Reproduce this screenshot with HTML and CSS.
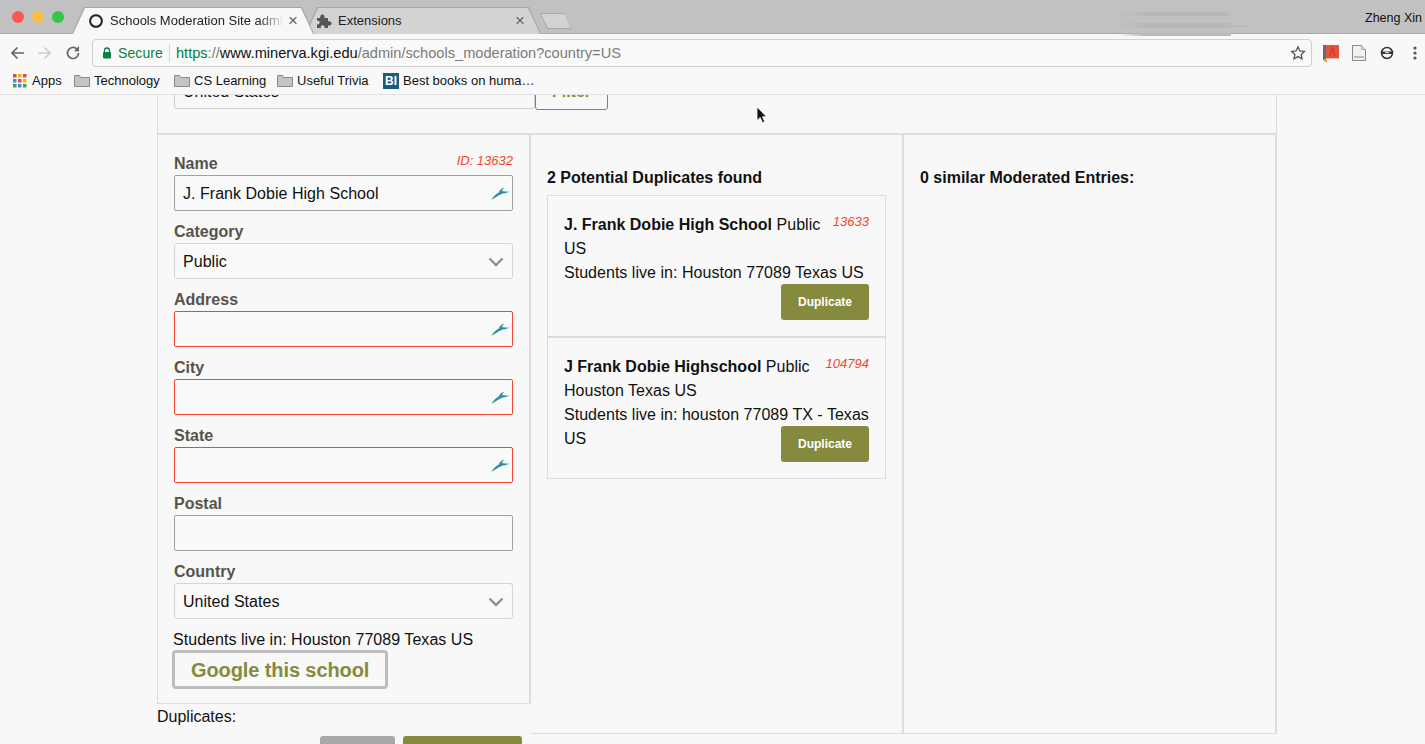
FILE: index.html
```html
<!DOCTYPE html>
<html>
<head lang="en">
    <meta charset="UTF-8">
    <title>Schools Moderation Site admin</title>
    <link rel="stylesheet" href="styles.css">
</head>
<body>
<div id="browser">
    <div id="tabstrip">
        <div id="lights"><i class="red"></i><i class="yellow"></i><i class="green"></i></div>
        <div class="tab active"><div class="tab-fill">
            <svg class="favicon" width="14" height="14" viewBox="0 0 14 14"><path d="M7 1.200a5.800 5.800 0 1 1-.01 0" fill="none" stroke="#222" stroke-width="2"/></svg>
            <span class="tab-title fade">Schools Moderation Site admin</span>
            <span class="tab-x">×</span>
        </div></div>
        <div class="tab second"><div class="tab-fill">
            <svg class="favicon" width="16" height="16" viewBox="0 0 16 16"><path d="M1 5h3.200C4 3 4.800 1.500 6.400 1.500S8.800 3 8.500 5H12v3.400c2-.4 3.500.4 3.500 2s-1.500 2.400-3.500 2V15H8.600c.3-1.800-.5-2.700-1.900-2.700S4.500 13.200 4.800 15H1v-3.600c1.500.3 2.700-.5 2.700-1.900S2.500 7.400 1 7.800z" fill="#555"/></svg>
            <span class="tab-title">Extensions</span>
            <span class="tab-x">×</span>
        </div></div>
        <div id="newtab"><div></div></div>
        <div id="username">Zheng Xin</div>
        <svg id="ghost" width="200" height="30" viewBox="0 0 200 30">
            <defs><linearGradient id="fadebar"><stop offset="0" stop-color="#b8b8b8" stop-opacity="0"/><stop offset=".25" stop-color="#b8b8b8"/></linearGradient></defs>
            <rect x="20" y="3" width="110" height="4" fill="url(#fadebar)"/>
            <rect x="20" y="14" width="110" height="5" fill="url(#fadebar)"/>
            <rect x="20" y="24" width="110" height="3" fill="url(#fadebar)"/>
            <rect x="128" y="3" width="4" height="4" fill="#b0bccd"/>
            <rect x="128" y="14" width="5" height="5" fill="#b0bccd"/>
            <rect x="128" y="24" width="5" height="3" fill="#b0bccd"/>
            <path d="M133 17h20" stroke="#b4b4b4"/>
            <circle cx="153" cy="1.500" r="2" fill="#b8c6cf"/>
            <circle cx="153" cy="17" r="2.500" fill="#b8c6cf"/>
            <circle cx="169" cy="22" r="1.500" fill="#b8c6cf"/>
        </svg>
    </div>
    <div id="toolbar">
        <svg class="nav" width="16" height="16" viewBox="0 0 16 16"><path d="M15 8H3M8.500 2.500 3 8l5.500 5.500" fill="none" stroke="#666" stroke-width="1.700"/></svg>
        <svg class="nav" width="16" height="16" viewBox="0 0 16 16"><path d="M1 8h12M7.500 2.500 13 8l-5.500 5.500" fill="none" stroke="#ccc" stroke-width="1.700"/></svg>
        <svg class="nav" width="16" height="16" viewBox="0 0 16 16"><path d="M13.500 8a5.500 5.500 0 1 1-1.600-3.900" fill="none" stroke="#666" stroke-width="1.700"/><path d="M14 1v5.200H8.800z" fill="#666"/></svg>
        <div id="omnibox">
            <svg width="10" height="12" viewBox="0 0 10 12"><path d="M2.500 5V3.500a2.500 2.500 0 0 1 5 0V5" fill="none" stroke="#0b8043" stroke-width="1.300"/><rect x="1" y="5" width="8" height="6.500" rx="1" fill="#0b8043"/></svg>
            <span class="secure">Secure</span>
            <span class="sep"></span>
            <span class="url"><span class="https">https</span><span class="dim">://</span><span class="host">www.minerva.kgi.edu</span><span class="dim">/admin/schools_moderation?country=US</span></span>
            <svg class="star" width="16" height="16" viewBox="0 0 16 16"><path d="m8 1.800 1.900 4.100 4.500.5-3.300 3 .9 4.400L8 11.600l-4 2.200.9-4.400-3.300-3 4.500-.5z" fill="none" stroke="#555" stroke-width="1.300"/></svg>
        </div>
        <div id="extensions">
            <svg width="16" height="18" viewBox="0 0 16 18"><rect x="0" y="1" width="3" height="15" fill="#5d6a85"/><rect x="3" y="1" width="13" height="13" fill="#e8503a"/><rect x="3" y="14" width="13" height="1" fill="#f3b0a5"/><rect x="1" y="15" width="3" height="3" fill="#eda92c"/><path d="m7 12 2.500-8 2.500 8" fill="none" stroke="#c33a28" stroke-width="1.200"/></svg>
            <svg width="14" height="16" viewBox="0 0 14 16"><path d="M.5.500h9l4 4v11H.5z" fill="#f1f1f1" stroke="#888"/><path d="M9.500.500v4h4" fill="#ddd" stroke="#aaa"/><rect x="2" y="11" width="10" height="2" fill="#bbb"/></svg>
            <svg width="14" height="14" viewBox="0 0 14 14"><circle cx="7" cy="7" r="5.500" fill="none" stroke="#333" stroke-width="1.500"/><rect x="2" y="5.500" width="10" height="2.500" fill="#333"/><rect x="5" y="6.200" width="4" height="1" fill="#eee"/></svg>
            <svg width="4" height="14" viewBox="0 0 4 14"><circle cx="2" cy="2" r="1.600" fill="#555"/><circle cx="2" cy="7" r="1.600" fill="#555"/><circle cx="2" cy="12" r="1.600" fill="#555"/></svg>
        </div>
    </div>
    <div id="bookmarks">
        <div class="bm apps">
            <svg width="14" height="14" viewBox="0 0 14 14">
                <rect width="3.500" height="3.500" fill="#e8453c"/><rect x="5" width="3.500" height="3.500" fill="#f4b400"/><rect x="10" width="3.500" height="3.500" fill="#e8453c"/>
                <rect y="5" width="3.500" height="3.500" fill="#4285f4"/><rect x="5" y="5" width="3.500" height="3.500" fill="#e8453c"/><rect x="10" y="5" width="3.500" height="3.500" fill="#f4b400"/>
                <rect y="10" width="3.500" height="3.500" fill="#34a853"/><rect x="5" y="10" width="3.500" height="3.500" fill="#4285f4"/><rect x="10" y="10" width="3.500" height="3.500" fill="#34a853"/>
            </svg>
            <span>Apps</span>
        </div>
        <div class="bm tech"><svg class="folder" width="16" height="14" viewBox="0 0 16 14"><path d="M.5 12.500v-11h5l1 2h9v9z" fill="#c4c4c4" stroke="#8a8a8a"/></svg><span>Technology</span></div>
        <div class="bm cs"><svg class="folder" width="16" height="14" viewBox="0 0 16 14"><path d="M.5 12.500v-11h5l1 2h9v9z" fill="#c4c4c4" stroke="#8a8a8a"/></svg><span>CS Learning</span></div>
        <div class="bm trivia"><svg class="folder" width="16" height="14" viewBox="0 0 16 14"><path d="M.5 12.500v-11h5l1 2h9v9z" fill="#c4c4c4" stroke="#8a8a8a"/></svg><span>Useful Trivia</span></div>
        <div class="bm"><span class="bi">BI</span><span>Best books on huma…</span></div>
    </div>
</div>

<div id="page">
    <div id="wrap">
        <div id="filter">
            <div class="filter-input">United States</div>
            <div class="filter-btn">Filter</div>
        </div>
        <div id="columns">
            <div class="left-cell">
                <div class="col-left">
                    <div class="label-row"><span class="label">Name</span><span class="id-red">ID: 13632</span></div>
                    <div class="field dark"><span>J. Frank Dobie High School</span><svg class="gazelle" width="21" height="15" viewBox="60 48 64 44"><path d="M64 89C70 79 78 72 87 67 89 60 95 55 104 52 99 56 97 60 98 63L120 65C110 69 100 70 94 72 84 76 74 84 64 89Z" fill="#2f8fa6"/></svg></div>

                    <div class="label">Category</div>
                    <div class="field light"><span>Public</span><svg class="chevron" width="16" height="10" viewBox="0 0 16 10"><path d="m1.500 1.500 6.500 6.500 6.500-6.500" fill="none" stroke="#8f8f8f" stroke-width="2.400"/></svg></div>

                    <div class="label">Address</div>
                    <div class="field error"><span></span><svg class="gazelle" width="21" height="15" viewBox="60 48 64 44"><path d="M64 89C70 79 78 72 87 67 89 60 95 55 104 52 99 56 97 60 98 63L120 65C110 69 100 70 94 72 84 76 74 84 64 89Z" fill="#2f8fa6"/></svg></div>

                    <div class="label">City</div>
                    <div class="field error"><span></span><svg class="gazelle" width="21" height="15" viewBox="60 48 64 44"><path d="M64 89C70 79 78 72 87 67 89 60 95 55 104 52 99 56 97 60 98 63L120 65C110 69 100 70 94 72 84 76 74 84 64 89Z" fill="#2f8fa6"/></svg></div>

                    <div class="label">State</div>
                    <div class="field error"><span></span><svg class="gazelle" width="21" height="15" viewBox="60 48 64 44"><path d="M64 89C70 79 78 72 87 67 89 60 95 55 104 52 99 56 97 60 98 63L120 65C110 69 100 70 94 72 84 76 74 84 64 89Z" fill="#2f8fa6"/></svg></div>

                    <div class="label">Postal</div>
                    <div class="field dark"></div>

                    <div class="label">Country</div>
                    <div class="field light"><span>United States</span><svg class="chevron" width="16" height="10" viewBox="0 0 16 10"><path d="m1.500 1.500 6.500 6.500 6.500-6.500" fill="none" stroke="#8f8f8f" stroke-width="2.400"/></svg></div>

                    <div class="live">Students live in: Houston 77089 Texas US</div>
                    <div class="google">Google this school</div>
                </div>
                <div class="dups">Duplicates:</div>
                <div class="actions"><div class="btn-gray"></div><div class="btn-green"></div></div>
            </div>
            <div class="col">
                <div class="col-title">2 Potential Duplicates found</div>
                <div class="card">
                    <span class="card-id">13633</span>
                    <b>J. Frank Dobie High School</b> Public<br>
                    US<br>
                    Students live in: Houston 77089 Texas US
                    <span class="dup-btn">Duplicate</span>
                </div>
                <div class="card">
                    <span class="card-id">104794</span>
                    <b>J Frank Dobie Highschool</b> Public<br>
                    Houston Texas US<br>
                    Students live in: houston 77089 TX - Texas US
                    <span class="dup-btn">Duplicate</span>
                </div>
            </div>
            <div class="col">
                <div class="col-title">0 similar Moderated Entries:</div>
            </div>
        </div>
    </div>
</div>

<svg id="cursor" width="12" height="18" viewBox="0 0 12 18"><path d="M1 1v13.500l3.200-3 2.300 5.200 2.200-1-2.200-5H10.500z" fill="#111" stroke="#fff" stroke-width=".8"/></svg>
</body>
</html>
```

FILE: styles.css
```css
*{
    margin: 0;
    padding: 0;
    box-sizing: border-box;
}
html,body{
    height: 744px;
    overflow: hidden;
}
body{
    background: #f8f8f8;
    color: #111;
    font-family: "Liberation Sans", Arial, sans-serif;
    font-size: 16px;
    line-height: 24px;
}

/* browser chrome */
#browser{
    height: 95px;
    position: relative;
    z-index: 2;
    background: #f8f8f8;
    border-bottom: 1px solid #e2e2e2;
}
#tabstrip{
    height: 34px;
    background: #c1c1c1;
    border-bottom: 1px solid #a9a9a9;
    display: flex;
    align-items: flex-end;
    position: relative;
    font-size: 13px;
    line-height: 16px;
}
#lights{
    width: 72px;
    height: 33px;
    padding: 11px 0 0 12px;
    display: flex;
    gap: 8px;
}
#lights i{
    width: 12px;
    height: 12px;
    border-radius: 50%;
}
#lights .red{ background: #fc5753; }
#lights .yellow{ background: #fdbc40; }
#lights .green{ background: #33c748; }
.tab{
    height: 27px;
    margin-bottom: -1px;
    background: #a6a6a6;
    clip-path: polygon(0 100%, 12px 0, calc(100% - 12px) 0, 100% 100%);
}
.tab-fill{
    height: 26px;
    margin: 1px 1px 0;
    display: flex;
    align-items: center;
    clip-path: polygon(0 100%, 12px 0, calc(100% - 12px) 0, 100% 100%);
}
.tab.active{
    width: 242px;
    position: relative;
    z-index: 1;
}
.tab.active .tab-fill{
    background: #f8f8f8;
    padding-left: 16px;
}
.tab.second{
    width: 236px;
    margin-left: -9px;
}
.tab.second .tab-fill{
    background: #d3d3d3;
    padding-left: 10px;
}
.favicon{
    flex: none;
    margin-right: 7px;
}
.tab.second .favicon{
    margin-right: 6px;
}
.tab-title{
    flex: 1;
    overflow: hidden;
    white-space: nowrap;
    color: #222;
}
.tab-title.fade{
    -webkit-mask-image: linear-gradient(to right, #000 85%, transparent 100%);
    mask-image: linear-gradient(to right, #000 85%, transparent 100%);
}
.tab-x{
    flex: none;
    width: 12px;
    margin: 0 14px 0 3px;
    color: #666;
    font-size: 17px;
    text-align: center;
}
#newtab{
    width: 31px;
    height: 16px;
    margin: 0 0 4px -1px;
    background: #a9a9a9;
    clip-path: polygon(0 0, 24px 0, 100% 100%, 7px 100%);
}
#newtab div{
    height: 14px;
    margin: 1px;
    background: #d3d3d3;
    clip-path: polygon(0 0, 24px 0, 100% 100%, 7px 100%);
}
#username{
    margin-left: auto;
    margin-right: 3px;
    height: 33px;
    padding-top: 10px;
    font-size: 12.500px;
    color: #111;
}
#ghost{
    position: absolute;
    left: 1098px;
    top: 9px;
}
#toolbar{
    height: 35px;
    display: flex;
    align-items: center;
    padding: 2px 0 0 9px;
}
.nav{
    flex: none;
    margin-right: 12px;
}
#omnibox{
    width: 1220px;
    height: 28px;
    margin-left: -1px;
    background: #f9f9f9;
    border: 1px solid #d0d0d0;
    border-radius: 4px;
    display: flex;
    align-items: center;
    padding-left: 9px;
    font-size: 14px;
    line-height: 18px;
}
.secure{
    color: #0b8043;
    margin-left: 6px;
    letter-spacing: .1px;
}
.sep{
    width: 1px;
    height: 18px;
    background: #d5d5d5;
    margin: 0 6px 0 6px;
}
.url{
    font-size: 14.600px;
}
.https{ color: #0b8043; }
.dim{ color: #7b7b7b; }
.host{ color: #111; }
.star{
    margin-left: auto;
    margin-right: 5px;
}
#extensions{
    display: flex;
    align-items: center;
    margin-left: 11px;
    gap: 13px;
}
#extensions svg:nth-child(3){ margin-left: 1px; }
#extensions svg:nth-child(4){ margin-left: 6px; }
#bookmarks{
    height: 25px;
    padding-bottom: 1px;
    display: flex;
    align-items: center;
    font-size: 13px;
    line-height: 16px;
    color: #111;
}
.bm{
    display: flex;
    align-items: center;
    white-space: nowrap;
}
.bm svg{
    margin-right: 5px;
}
.bm.apps{ margin-left: 13px; width: 61px; }
.bm.tech{ width: 100px; }
.bm.cs{ width: 103px; }
.bm.trivia{ width: 106px; }
.folder{
    margin-right: 4px !important;
}
.bi{
    width: 16px;
    height: 16px;
    margin-right: 4px;
    background: #1d5a80;
    color: #fff;
    font-size: 12px;
    font-weight: bold;
    line-height: 16px;
    text-align: center;
}

/* page */
#page{
    height: 649px;
    overflow: hidden;
}
#wrap{
    width: 1120px;
    margin: -22px 0 0 157px;
}
#filter{
    display: flex;
    height: 62px;
    padding-left: 16px;
    border-left: 1px solid #ddd;
    border-right: 1px solid #ddd;
    border-bottom: 2px solid #ddd;
}
.filter-input{
    width: 361px;
    height: 36px;
    padding: 6px 8px;
    border: 1px solid #ccc;
    border-radius: 3px;
}
.filter-btn{
    width: 73px;
    height: 37px;
    padding-top: 6px;
    border: 1px solid #858a3e;
    border-radius: 0 0 3px 3px;
    color: #858a3e;
    font-weight: bold;
    text-align: center;
}
#columns{
    display: grid;
    grid-template-columns: 374px 373px 373px;
    align-items: start;
}
.col-left{
    height: 569px;
    padding: 17px 16px 0;
    border-left: 1px solid #ddd;
    border-right: 2px solid #ddd;
    border-bottom: 1px solid #ddd;
}
.label-row{
    display: flex;
    justify-content: space-between;
    margin-bottom: -1px;
}
.label{
    color: #57534a;
    font-weight: bold;
    padding-top: 3px;
    margin-bottom: -1px;
}
.label-row .label{
    padding-top: 0;
    margin-bottom: 0;
}
.id-red, .card-id{
    color: #f4452f;
    font-size: 13px;
    font-style: italic;
    line-height: 18px;
}
.field{
    height: 36px;
    margin-bottom: 6px;
    padding: 1px 1px 0 8px;
    display: flex;
    align-items: center;
    justify-content: space-between;
    border: 1px solid #ccc;
    border-radius: 2px;
    background: #f9f9f9;
    letter-spacing: .03px;
}
.field.dark{ border-color: #a3a19a; }
.field.light{ border-color: #d5d5d5; border-radius: 3px; }
.field.error{ border-color: #f4452f; }
.chevron{
    margin-right: 7px;
}
.live{
    margin-left: -1px;
    margin-top: 9px;
    height: 24px;
    white-space: nowrap;
    letter-spacing: .04px;
}
.google{
    width: 216px;
    height: 39px;
    margin: -2px 0 0 -2px;
    padding: 1px 0 0 16px;
    border: 3px solid #bdbdbd;
    border-radius: 4px;
    color: #858a3e;
    font-size: 20px;
    font-weight: bold;
    line-height: 33px;
    letter-spacing: -.1px;
    white-space: nowrap;
}
.dups{
    padding-top: 1px;
}
.actions{
    display: flex;
    justify-content: flex-end;
    gap: 8px;
    margin-top: 7px;
    padding-right: 9px;
}
.btn-gray{
    width: 75px;
    height: 36px;
    background: #a8a8a8;
    border-radius: 3px;
}
.btn-green{
    width: 119px;
    height: 36px;
    background: #858a3e;
    border-radius: 3px;
}
.col{
    height: 599px;
    padding: 31px 16px 0;
    border-right: 2px solid #ddd;
    border-bottom: 1px solid #ddd;
}
.col-title{
    font-weight: bold;
    margin-bottom: 5px;
    white-space: nowrap;
}
.card{
    display: flow-root;
    width: 339px;
    padding: 17px 16px 16px;
    border: 1px solid #ddd;
    letter-spacing: .03px;
}
.card b{
    letter-spacing: 0;
}
.card-id{
    float: right;
    letter-spacing: 0;
}
.dup-btn{
    float: right;
    width: 88px;
    height: 36px;
    margin-top: -1px;
    background: #858a3e;
    border-radius: 3px;
    color: #fff;
    font-size: 12px;
    font-weight: bold;
    line-height: 36px;
    text-align: center;
    letter-spacing: 0;
}
#cursor{
    position: absolute;
    left: 756px;
    top: 106px;
    z-index: 3;
}
```
